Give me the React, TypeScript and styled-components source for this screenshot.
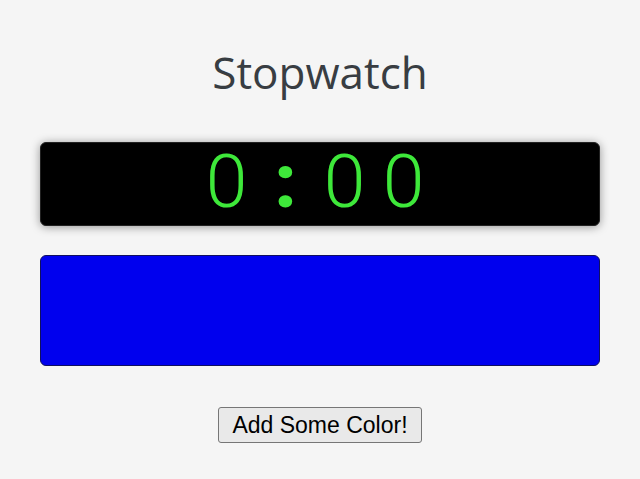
import styled, { createGlobalStyle } from 'styled-components';

const GlobalStyle = createGlobalStyle`
  html, body {
    margin: 0;
    padding: 0;
    background: #f5f5f5;
  }
`;

const Page = styled.main`
  display: flex;
  flex-direction: column;
  align-items: center;
  padding: 43px 40px 0;
`;

const Title = styled.h1`
  margin: 0;
  font-family: 'Open Sans', sans-serif;
  font-weight: 400;
  font-size: 44px;
  line-height: 59px;
  color: #383d42;
`;

const Display = styled.div`
  box-sizing: border-box;
  width: 100%;
  height: 84px;
  margin-top: 40px;
  padding: 0 10px 5px 0;
  display: flex;
  align-items: center;
  justify-content: center;
  background: #000;
  border: 1px solid #222;
  border-radius: 6px;
  box-shadow: 0 1px 10px rgba(0, 0, 0, 0.4);
`;

const Cell = styled.span<{ $bold?: boolean }>`
  width: 59px;
  text-align: center;
  font-family: Roboto, 'Open Sans', sans-serif;
  font-weight: ${({ $bold }) => ($bold ? 900 : 300)};
  font-size: 75px;
  line-height: 1;
  color: #3ee83a;
`;

const Swatch = styled.div<{ $color: string }>`
  box-sizing: border-box;
  width: 100%;
  height: 111px;
  margin-top: 29px;
  background: ${({ $color }) => $color};
  border: 1px solid #101060;
  border-radius: 6px;
`;

const ColorButton = styled.button`
  margin-top: 41px;
  height: 36px;
  padding: 0 13px;
  font-family: 'Liberation Sans', Arial, sans-serif;
  font-size: 23px;
  color: #000;
  background: #e9e9e9;
  border: 1px solid #767676;
  border-radius: 3px;
`;

const App = () => {
  const time = '0:00';
  return (
    <>
      <GlobalStyle />
      <Page>
        <Title>Stopwatch</Title>
        <Display>
          {time.split('').map((ch, i) => (
            <Cell key={i} $bold={ch === ':'}>
              {ch}
            </Cell>
          ))}
        </Display>
        <Swatch $color="#0000ee" />
        <ColorButton>Add Some Color!</ColorButton>
      </Page>
    </>
  );
};

export default App;
